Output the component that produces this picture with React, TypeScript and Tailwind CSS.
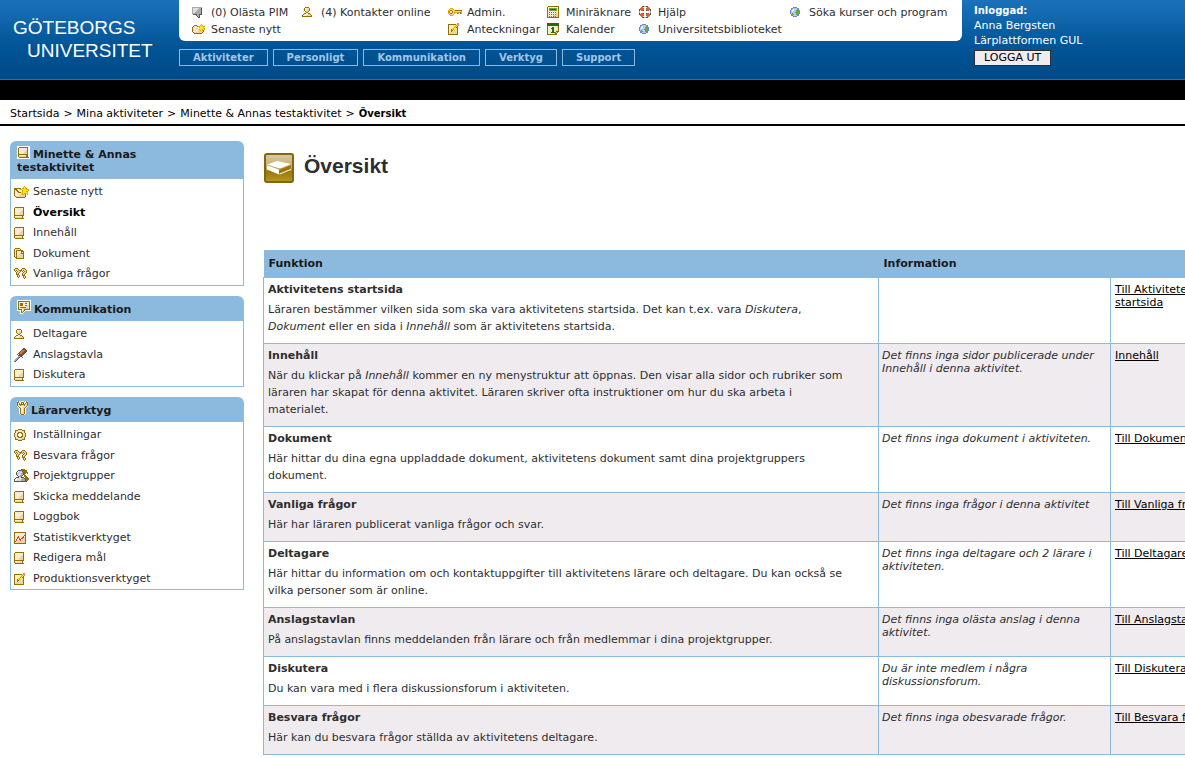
import React from 'react';

// Palette for the small bitmap style icons, one letter per colour
const palette: Record<string, string> = {
  g: '#966f00',
  y: '#e9d5a3',
  c: '#f7ecd0',
  w: '#ffffff',
  s: '#ffe229',
  o: '#e0a800',
  k: '#555555',
  a: '#a9a9a9',
  l: '#dcdcdc',
  r: '#d9622e',
  p: '#e87bc0',
  b: '#6d86d6',
  i: '#b9c8ee',
  n: '#5fae3a',
  d: '#2b6a10',
  m: '#8a4b1c',
  t: '#c4783f',
  e: '#d23c3c',
};

const icons = {
  book: [
    '.ggggggggg',
    'gccccccccg',
    'gccccccccg',
    'gcccccccyg',
    'gccccccyyg',
    'gcccccyyyg',
    'gccccyyyyg',
    'gccccyyyyg',
    'gggggggggg',
    'gcccccccg.',
    'gyyyyyyyg.',
    '.ggggggggg',
  ],
  bookTitle: [
    'wwwwwwwwwwwww',
    'wwgggggggggww',
    'wgccccccccgww',
    'wgccccccccgww',
    'wgcccccccygww',
    'wgccccccyygww',
    'wgcccccyyygww',
    'wgccccyyyygww',
    'wggggggggggww',
    'wgccccccyggww',
    'wgyyyyyyyggww',
    'wwggggggggggw',
    'wwwwwwwwwwwww',
  ],
  mailStar: [
    '..........o....',
    '.........oso...',
    'ggggggg.oosoo..',
    'gggcccoossssooo',
    'gcggccccossssso',
    'gccggcccosssoo.',
    'gcccgggcosssso.',
    'gccccccyosooso.',
    'gcccccyyooyg.o.',
    'gccccyyyyyyg...',
    '.gyyyyyyyyyg...',
    '..ggggggggg....',
  ],
  folderStar: [
    '.........o...',
    '..ggg...oso..',
    '.gcccgoosssoo',
    'gcyccccossso.',
    'gcccyyccsssso',
    'gyccccyossoso',
    'gycycccyoyog.',
    'gccccyyyyyyg.',
    '.gyyyyyyyyg..',
    '..gggggggg...',
  ],
  person: [
    '...gggg...',
    '..gccccg..',
    '..gccyyg..',
    '..gcyyyg..',
    '...gyyg...',
    '....gg....',
    '..ggccgg..',
    '.gccccyyg.',
    'gccccyyyyg',
    'gggggggggg',
  ],
  group: [
    '.......gggg....',
    '....kkkkggggg..',
    '...kwiilkgggg..',
    '..kwiillakgggg.',
    '..kiillaakgg.g.',
    '..killlaakg....',
    '...kllaak.gg...',
    '....kaak..ggg..',
    '..kkkllkkk.ggg.',
    '.kwlllllaakgggg',
    'kwwllllaaaakggg',
    'kwlllllaaaakgg.',
    'kkkkkkkkkkkkk..',
  ],
  speech: [
    'aaaaaaaaaa',
    'allllllaak',
    'alllllaaak',
    'allllaaaak',
    'alllaaaaak',
    'allaaaaaak',
    'aaaaaaaaak',
    '.kkkkaakkk',
    '....kaak..',
    '.....kak..',
    '......kk..',
  ],
  speechTitle: [
    'wwwwwwwwwwwwww',
    'wggggggggggggw',
    'wgccccccccccgw',
    'wgcgggccggccgw',
    'wgcgggccccccgw',
    'wgcgggccggycgw',
    'wgccccccccyygw',
    'wgcggggggyyygw',
    'wgcccyyyyyyygw',
    'wggggcyggggggw',
    'wwwwgcygwwwwww',
    '...wgygw......',
    '...wggw.......',
    '...www........',
  ],
  tools: [
    'wgw.www.wgw',
    'ggwwgggwwgg',
    'gcgwgwgwgcg',
    'gcggggggycg',
    'gccgyyygcyg',
    'wgccccccygw',
    '.wgcccyygw.',
    '..wgccygw..',
    '..wgccygw..',
    '..wgccygw..',
    '..wgccygw..',
    '..wgccygw..',
    '..wgyyygw..',
    '...wgggw...',
  ],
  key: [
    '..ooo.........',
    '.oyyyo........',
    'oyggyyoggggggg',
    'og..gyyyyyyyyo',
    'og..gyoooooogo',
    'oyggyyo..go.go',
    '.oyyyo........',
    '..ooo.........',
  ],
  edit: [
    '.........pp',
    'ggggggggspp',
    'gccccccsosp',
    'gcccccsosg.',
    'gccccsosgg.',
    'gcccsosycg.',
    'gccgsoyycg.',
    'gccggyyyyg.',
    'gccgyyyyyg.',
    'gcyyyyyyyg.',
    'gyyyyyyyyg.',
    'gggggggggg.',
  ],
  calculator: [
    '.ggggggggggg',
    'gccccccccccg',
    'gcnnnnnnnncg',
    'gcnddddddncg',
    'gcnnnnnnnncg',
    'gccccccccccg',
    'gcgcgcgcgycg',
    'gccccccccycg',
    'gcgcgcgcgyyg',
    'gcccccyyyyyg',
    'gcgcgcgygyyg',
    'gggggggggggg',
  ],
  calendar: [
    'dddddddddddd',
    'dddddddddddd',
    'dddddddddddd',
    'gcccccccccyg',
    'gccccddcccyg',
    'gcccdddcccyg',
    'gccccddcccyg',
    'gccccddccyyg',
    'gccccddcyggg',
    'gcccddddgyg.',
    'gccccccygg..',
    'gggggggggg..',
  ],
  lifebuoy: [
    '...kkaakk...',
    '..rrlwwlrr..',
    '.rrrrwwrrrr.',
    'krrrrwwrrrrk',
    'klrrk..krrlk',
    'awww....wwwa',
    'awww....wwwa',
    'klrrk..krrlk',
    'krrrrwwrrrrk',
    '.rrrrwwrrrr.',
    '..rrlwwlrr..',
    '...kkaakk...',
  ],
  globe: [
    '...bbbb...',
    '.bbiiiibb.',
    '.biwiiinb.',
    'biwwiinnnb',
    'biwiiinnnb',
    'biiiinnnnb',
    'biniiinnnb',
    '.bnniinnb.',
    '.bbiiiibb.',
    '...bbbb...',
  ],
  documents: [
    '.ggggg....',
    'gcccccg...',
    'gcggggggg.',
    'gcgccccggg',
    'gcgccccgcg',
    'gcgcccyggg',
    'gcgccyyyyg',
    'gcgcyyyyyg',
    'gygyyyyyyg',
    '.ggyyyyyyg',
    '..gggggggg',
  ],
  questions: [
    '.ggg....ggg...',
    'gyyyg..gyyyg..',
    'gygyygggygyyg.',
    '.g.gyyg.g.gyg.',
    '..gyyg...gyyg.',
    '..gyg...gyyg..',
    '..ggg...gyg...',
    '...gyg..ggg...',
    '...gyg...gyg..',
    '....g....gyg..',
    '..........g...',
  ],
  gear: [
    '....gggg....',
    '.gggyccyggg.',
    '.gyccccccyg.',
    '.gccggggccg.',
    'gycgg..ggcyg',
    'gccg....gccg',
    'gccg....gyyg',
    'gycgg..ggyyg',
    '.gccggggyyg.',
    '.gyccccyyyg.',
    '.gggyyyyggg.',
    '....gggg....',
  ],
  pin: [
    '.........kk..',
    '........kmmk.',
    '.......ktttmk',
    '......ktttmmk',
    '.....ktttmmk.',
    '....ktttmmk..',
    '...k.kmmmk...',
    '....kkkmk....',
    '....aakk.....',
    '...aak..k....',
    '..aak........',
    '.aak.........',
    'aak..........',
    'ak...........',
  ],
  chart: [
    'gggggggggggg',
    'gccccccccccg',
    'gcccccccccyg',
    'gccccccccceg',
    'gccceccccecg',
    'gcceeccceecg',
    'gccececeecyg',
    'gcecceecyyyg',
    'gceccyecyyyg',
    'gecyyyyyyyyg',
    'gcyyyyyyyyyg',
    'gggggggggggg',
  ],
};

type IconName = keyof typeof icons;

type IconProps = { name: IconName; box?: number; className?: string };

// box is the height of the canvas, the bitmap is centred in it on whole pixels
function Icon({ name, box, className = '' }: IconProps) {
  const rows = icons[name];
  const width = rows[0].length;
  const height = box ?? rows.length;
  const top = Math.floor((height - rows.length) / 2);
  return (
    <svg
      width={width}
      height={height}
      viewBox={`0 ${-top} ${width} ${height}`}
      shapeRendering="crispEdges"
      aria-hidden="true"
      className={className}
    >
      {rows.map((row, y) =>
        row
          .split('')
          .map((ch, x) =>
            palette[ch] ? (
              <rect key={`${x}-${y}`} x={x} y={y} width="1" height="1" fill={palette[ch]} />
            ) : null
          )
      )}
    </svg>
  );
}

type LinkItem = { icon: IconName; label: string; active?: boolean };

const shortcuts: LinkItem[][] = [
  [
    { icon: 'speech', label: '(0) Olästa PIM' },
    { icon: 'folderStar', label: 'Senaste nytt' },
  ],
  [{ icon: 'person', label: '(4) Kontakter online' }],
  [
    { icon: 'key', label: 'Admin.' },
    { icon: 'edit', label: 'Anteckningar' },
  ],
  [
    { icon: 'calculator', label: 'Miniräknare' },
    { icon: 'calendar', label: 'Kalender' },
  ],
  [
    { icon: 'lifebuoy', label: 'Hjälp' },
    { icon: 'globe', label: 'Universitetsbiblioteket' },
  ],
  [{ icon: 'globe', label: 'Söka kurser och program' }],
];

const tabs = ['Aktiviteter', 'Personligt', 'Kommunikation', 'Verktyg', 'Support'];

const menus: { title: string; icon: IconName; items: LinkItem[] }[] = [
  {
    title: 'Minette & Annas testaktivitet',
    icon: 'bookTitle',
    items: [
      { icon: 'mailStar', label: 'Senaste nytt' },
      { icon: 'book', label: 'Översikt', active: true },
      { icon: 'book', label: 'Innehåll' },
      { icon: 'documents', label: 'Dokument' },
      { icon: 'questions', label: 'Vanliga frågor' },
    ],
  },
  {
    title: 'Kommunikation',
    icon: 'speechTitle',
    items: [
      { icon: 'person', label: 'Deltagare' },
      { icon: 'pin', label: 'Anslagstavla' },
      { icon: 'book', label: 'Diskutera' },
    ],
  },
  {
    title: 'Lärarverktyg',
    icon: 'tools',
    items: [
      { icon: 'gear', label: 'Inställningar' },
      { icon: 'questions', label: 'Besvara frågor' },
      { icon: 'group', label: 'Projektgrupper' },
      { icon: 'book', label: 'Skicka meddelande' },
      { icon: 'book', label: 'Loggbok' },
      { icon: 'chart', label: 'Statistikverktyget' },
      { icon: 'book', label: 'Redigera mål' },
      { icon: 'edit', label: 'Produktionsverktyget' },
    ],
  },
];

const rows: { title: string; text: React.ReactNode; info: string; link: string }[] = [
  {
    title: 'Aktivitetens startsida',
    text: (
      <>
        Läraren bestämmer vilken sida som ska vara aktivitetens startsida. Det kan t.ex. vara{' '}
        <em>Diskutera</em>,<br />
        <em>Dokument</em> eller en sida i <em>Innehåll</em> som är aktivitetens startsida.
      </>
    ),
    info: '',
    link: 'Till Aktivitetens startsida',
  },
  {
    title: 'Innehåll',
    text: (
      <>
        När du klickar på <em>Innehåll</em> kommer en ny menystruktur att öppnas. Den visar alla
        sidor och rubriker som
        <br />
        läraren har skapat för denna aktivitet. Läraren skriver ofta instruktioner om hur du ska
        arbeta i<br />
        materialet.
      </>
    ),
    info: 'Det finns inga sidor publicerade under Innehåll i denna aktivitet.',
    link: 'Innehåll',
  },
  {
    title: 'Dokument',
    text: (
      <>
        Här hittar du dina egna uppladdade dokument, aktivitetens dokument samt dina projektgruppers
        <br />
        dokument.
      </>
    ),
    info: 'Det finns inga dokument i aktiviteten.',
    link: 'Till Dokument',
  },
  {
    title: 'Vanliga frågor',
    text: 'Här har läraren publicerat vanliga frågor och svar.',
    info: 'Det finns inga frågor i denna aktivitet',
    link: 'Till Vanliga frågor',
  },
  {
    title: 'Deltagare',
    text: (
      <>
        Här hittar du information om och kontaktuppgifter till aktivitetens lärare och deltagare. Du
        kan också se
        <br />
        vilka personer som är online.
      </>
    ),
    info: 'Det finns inga deltagare och 2 lärare i aktiviteten.',
    link: 'Till Deltagare',
  },
  {
    title: 'Anslagstavlan',
    text: 'På anslagstavlan finns meddelanden från lärare och från medlemmar i dina projektgrupper.',
    info: 'Det finns inga olästa anslag i denna aktivitet.',
    link: 'Till Anslagstavlan',
  },
  {
    title: 'Diskutera',
    text: 'Du kan vara med i flera diskussionsforum i aktiviteten.',
    info: 'Du är inte medlem i några diskussionsforum.',
    link: 'Till Diskutera',
  },
  {
    title: 'Besvara frågor',
    text: 'Här kan du besvara frågor ställda av aktivitetens deltagare.',
    info: 'Det finns inga obesvarade frågor.',
    link: 'Till Besvara frågor',
  },
];

function Header() {
  return (
    <header>
      <div className="flex h-20 items-start border-b border-[#1c73b9] bg-linear-to-b from-[#1b72bb] via-[#005496] via-60% to-[#004a87]">
        <a
          href="#"
          className="w-[179px] shrink-0 pt-4 pl-[13px] font-['Liberation_Sans',Arial,sans-serif] text-[19px] leading-[23px] font-light text-white"
        >
          <span className="block">GÖTEBORGS</span>
          <span className="block pl-[14px]">UNIVERSITET</span>
        </a>
        <div className="w-[783px] shrink-0">
          <div className="grid h-[41px] grid-cols-[110px_146px_99px_92px_151px_1fr] rounded-b-md bg-white pt-1 pl-[13px] text-[#2e2e2e]">
            {shortcuts.map((column) => (
              <ul key={column[0].label}>
                {column.map((item) => (
                  <li key={item.label}>
                    <a
                      href="#"
                      className="flex h-[17px] items-center leading-[17px] whitespace-nowrap"
                    >
                      <span className="w-[19px] shrink-0">
                        <Icon name={item.icon} box={17} />
                      </span>
                      {item.label}
                    </a>
                  </li>
                ))}
              </ul>
            ))}
          </div>
          <nav className="mt-2 flex gap-[5px] text-[10px]">
            {tabs.map((tab) => (
              <a
                key={tab}
                href="#"
                className="flex h-[17px] items-center border border-[#8cb9de] px-[13px] font-bold text-[#a3c6e6]"
              >
                {tab}
              </a>
            ))}
          </nav>
        </div>
        <div className="shrink-0 pt-[3px] pl-3 leading-[15px] text-white">
          <p className="text-[10px] leading-[15px] font-bold">Inloggad:</p>
          <p>Anna Bergsten</p>
          <p>Lärplattformen GUL</p>
          <button
            type="button"
            className="mt-[2px] block h-4 border border-[#2e2e2e] bg-[#efebef] px-[9px] leading-[14px] text-black"
          >
            LOGGA UT
          </button>
        </div>
      </div>
      <div className="h-5 bg-black" />
    </header>
  );
}

function Breadcrumb() {
  return (
    <nav className="flex h-[26px] items-baseline gap-1 border-b-2 border-black px-[10px] pt-[5px] leading-[17px] text-black">
      <a href="#">Startsida</a>
      <span>&gt;</span>
      <a href="#">Mina aktiviteter</a>
      <span>&gt;</span>
      <a href="#">Minette &amp; Annas testaktivitet</a>
      <span>&gt;</span>
      <strong className="text-[10px]">Översikt</strong>
    </nav>
  );
}

function Sidebar() {
  return (
    <aside className="flex w-[234px] shrink-0 flex-col gap-[10px]">
      {menus.map((menu) => (
        <section key={menu.title}>
          <h2 className="rounded-t-md bg-[#8cb9de] pt-[7px] pr-[60px] pb-[5px] pl-[7px] leading-[13px] font-bold text-[#1a1a1a]">
            <Icon name={menu.icon} className="-mt-2 mr-[3px] inline-block align-[-1px]" />
            {menu.title}
          </h2>
          <ul className="border border-t-0 border-[#8cb9de] pt-[3px]">
            {menu.items.map((item) => (
              <li key={item.label} className="h-5 odd:h-[21px]">
                <a href="#" className="flex h-5 items-center pl-[3px]">
                  <span className="w-[19px] shrink-0">
                    <Icon name={item.icon} box={16} />
                  </span>
                  <span className={item.active ? 'font-bold text-black' : ''}>{item.label}</span>
                </a>
              </li>
            ))}
          </ul>
        </section>
      ))}
    </aside>
  );
}

function TitleIcon() {
  return (
    <svg width="30" height="30" viewBox="0 0 30 30" aria-hidden="true">
      <defs>
        <linearGradient id="gold" x1="0" y1="0" x2="0" y2="1">
          <stop offset="0" stopColor="#d9cba6" />
          <stop offset="0.5" stopColor="#c4ab66" />
          <stop offset="0.62" stopColor="#9c7708" />
          <stop offset="1" stopColor="#b8962c" />
        </linearGradient>
      </defs>
      <rect x="1" y="1" width="28" height="28" rx="2" fill="url(#gold)" stroke="#876410" strokeWidth="2" />
      <path d="M3 11.5 13 8 27 11 16 15.5Z" fill="#fff" />
      <path d="M3 12.5 15 16.5V21.5L3 16.5Z" fill="#fff" />
      <path d="M16 16.5 27 12V15.5L16 20.5Z" fill="#9c7708" />
      <path d="M15.5 21 27 16.5" stroke="#fff" />
    </svg>
  );
}

function OverviewTable() {
  return (
    <table className="w-full min-w-[980px] table-fixed border-collapse">
      <thead>
        <tr className="h-[27px] bg-[#8cb9de] text-left text-[#1a1a1a]">
          <th className="w-[615px] px-[5px] pt-[2px]">Funktion</th>
          <th className="w-[232px] px-[5px] pt-[2px]">Information</th>
          <th aria-label="Länk" />
        </tr>
      </thead>
      <tbody>
        {rows.map((row) => (
          <tr key={row.title} className="align-top even:bg-[#efebef]">
            <td className="border border-[#8cb9de] px-1 pt-[5px] pb-2">
              <h3 className="mb-1 leading-[14px] font-bold">{row.title}</h3>
              <p className="leading-[17px]">{row.text}</p>
            </td>
            <td className="border border-[#8cb9de] px-[3px] pt-[5px] leading-[13px] italic">
              {row.info}
            </td>
            <td className="border border-[#8cb9de] px-1 pt-[5px] leading-[13px]">
              <a href="#" className="block w-[110px] text-black underline">
                {row.link}
              </a>
            </td>
          </tr>
        ))}
      </tbody>
    </table>
  );
}

export default function App() {
  return (
    <div className="min-h-screen overflow-x-hidden bg-white font-['DejaVu_Sans',Verdana,sans-serif] text-[11px] text-[#2e2e2e]">
      <Header />
      <Breadcrumb />
      <div className="flex gap-[19px] pt-[15px] pl-[10px]">
        <Sidebar />
        <main className="min-w-0 flex-1">
          <div className="flex h-[109px] items-start gap-[10px] pt-3 pl-px">
            <TitleIcon />
            <h1 className="font-['Liberation_Sans',Arial,sans-serif] text-[21px] leading-[26px] font-bold">
              Översikt
            </h1>
          </div>
          <OverviewTable />
        </main>
      </div>
    </div>
  );
}
